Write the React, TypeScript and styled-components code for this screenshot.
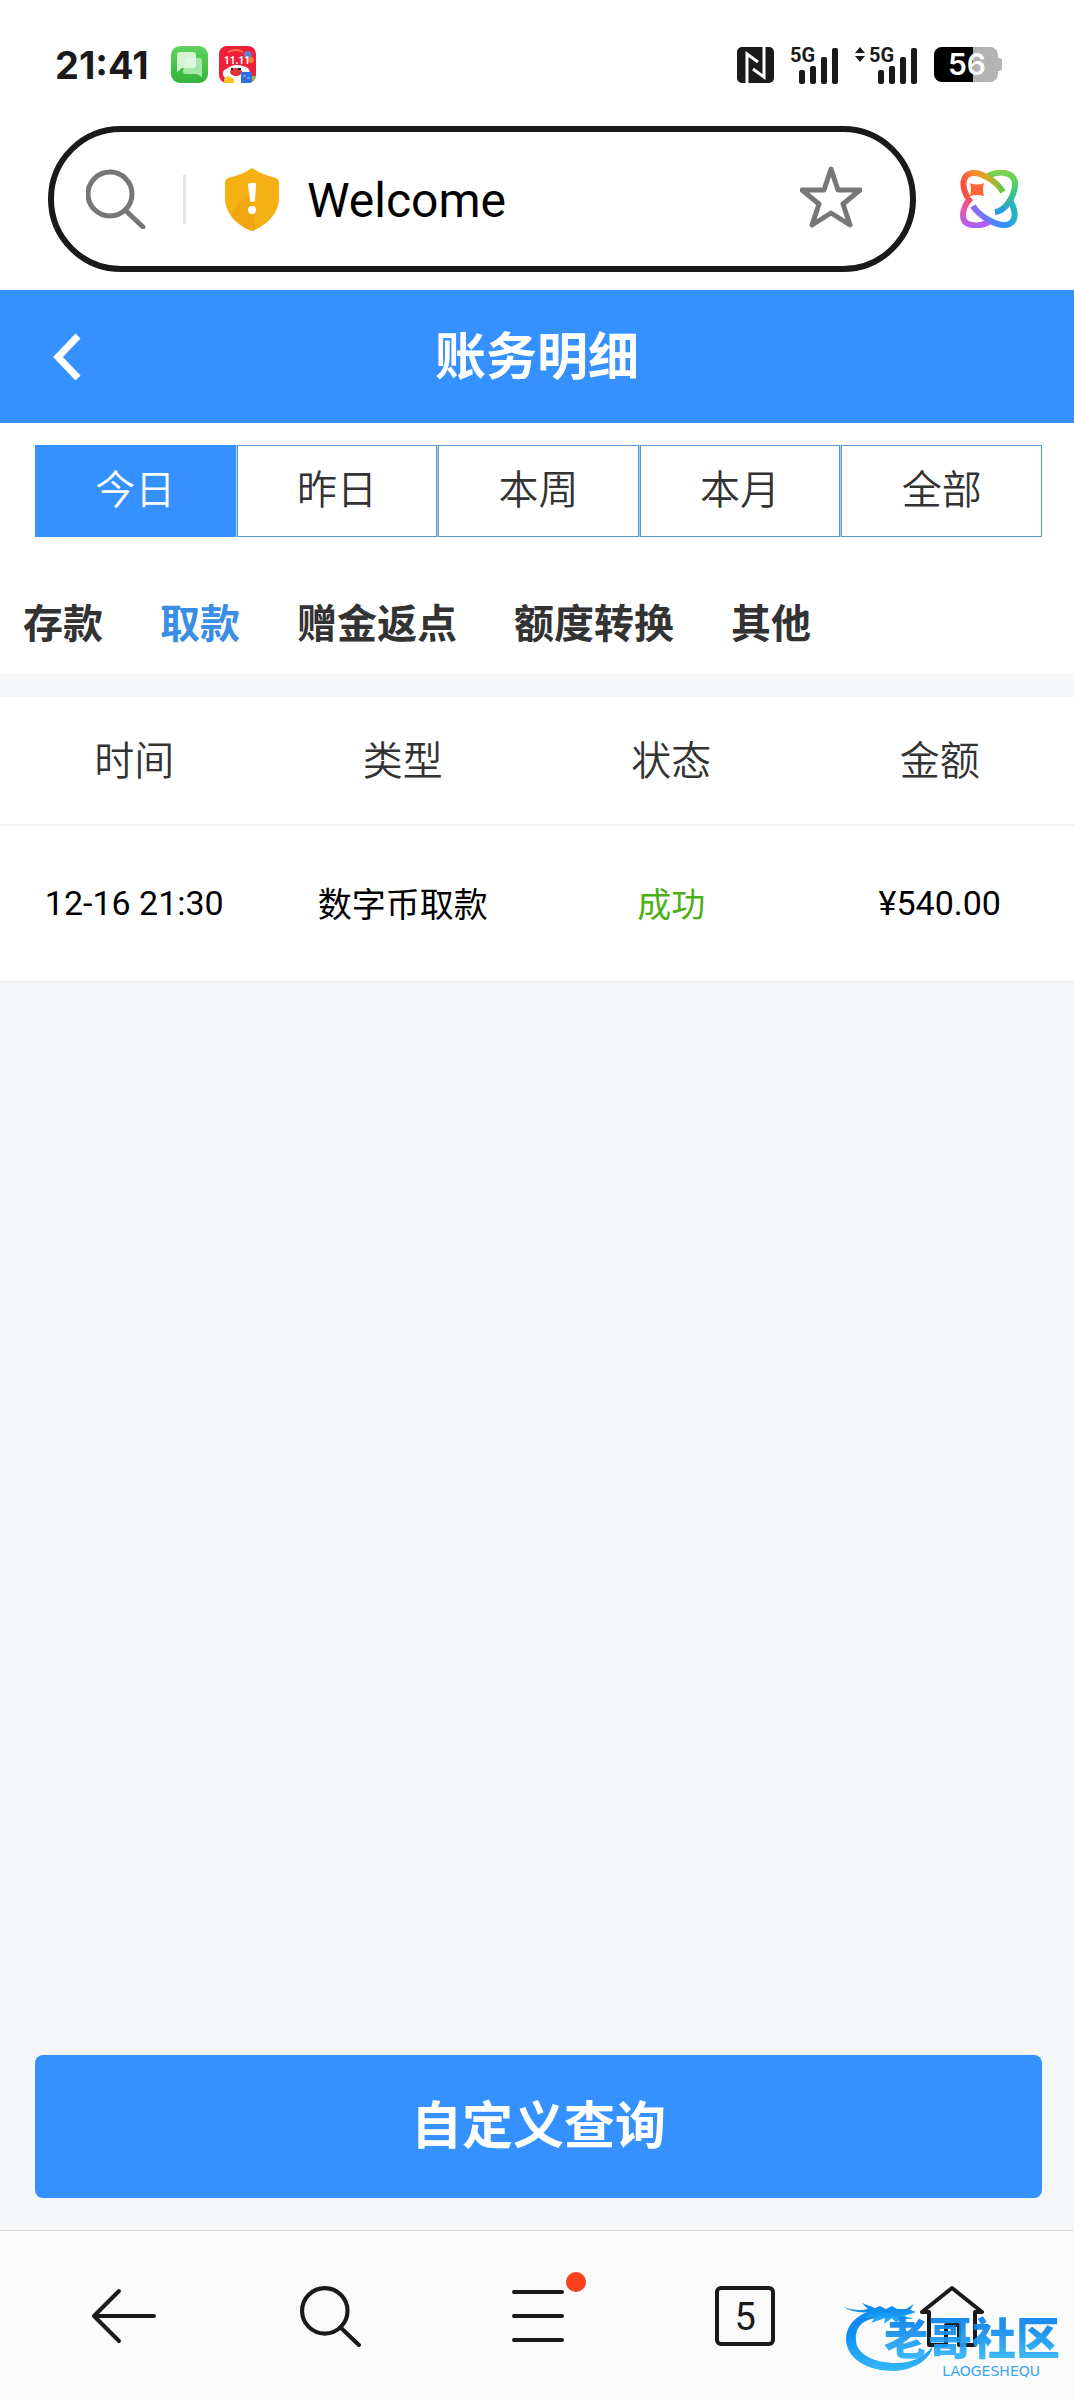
import React, { useState } from "react";
import styled, { createGlobalStyle } from "styled-components";

const BLUE = "#3491ff";
const INK = "#1a1a1a";

const GlobalStyle = createGlobalStyle`
  *, *::before, *::after { box-sizing: border-box; }
  body {
    margin: 0;
    background: #f4f6f8;
    color: #333;
    font-family: Roboto, "Noto Sans CJK SC", sans-serif;
  }
  button, input { font: inherit; color: inherit; }
  button { margin: 0; padding: 0; border: 0; background: none; cursor: pointer; }
  svg { display: block; flex: none; }
`;

const Page = styled.div`
  min-height: 100vh;
  display: flex;
  flex-direction: column;
`;

/* ---------- phone status bar ---------- */

const StatusBar = styled.div`
  display: flex;
  align-items: center;
  justify-content: space-between;
  height: 126px;
  padding: 3px 72px 0 55px;
  background: #fff;
`;

const StatusGroup = styled.div<{ $gap: number }>`
  display: flex;
  align-items: center;
  gap: ${(p) => p.$gap}px;
`;

const Clock = styled.time`
  margin-right: 11px;
  font: 700 38px/44px Inter, sans-serif;
  color: ${INK};
`;

/* ---------- browser address bar ---------- */

const AddressRow = styled.div`
  display: flex;
  align-items: center;
  gap: 44px;
  padding: 0 56px 18px 48px;
  background: #fff;
`;

const AddressPill = styled.div`
  flex: 1;
  min-width: 0;
  display: flex;
  align-items: center;
  height: 146px;
  padding: 0 48px 0 32px;
  border: 6px solid ${INK};
  border-radius: 73px;
`;

const PillDivider = styled.span`
  width: 3px;
  height: 49px;
  margin: 0 39px 0 37px;
  background: #e4e4e4;
`;

const AddressInput = styled.input`
  flex: 1;
  min-width: 0;
  margin-left: 27px;
  padding: 4px 0 0;
  border: 0;
  outline: 0;
  background: none;
  color: #000;
  font-size: 48px;
  line-height: 60px;
`;

const StarButton = styled.button`
  padding-bottom: 4px;
`;

/* ---------- page title ---------- */

const TitleBar = styled.header`
  display: grid;
  grid-template-columns: 1fr auto 1fr;
  align-items: center;
  height: 133px;
  padding: 0 50px;
  background: ${BLUE};
  color: #fff;
`;

const Title = styled.h1`
  margin: 0;
  padding-top: 3px;
  font-size: 51px;
  line-height: 72px;
  font-weight: 700;
`;

/* ---------- filters ---------- */

const FilterPanel = styled.section`
  padding: 22px 0 21px;
  background: #fff;
`;

const RangeTabs = styled.div`
  display: grid;
  grid-template-columns: repeat(5, 1fr);
  gap: 1px;
  margin: 0 32px 0 35px;
  background: #a5d2fb;
`;

const RangeTab = styled.button<{ $active: boolean }>`
  height: 92px;
  border: 1px solid ${(p) => (p.$active ? BLUE : "#5797d0")};
  background: ${(p) => (p.$active ? BLUE : "#fff")};
  color: ${(p) => (p.$active ? "#fff" : "#333")};
  font-size: 40px;
  line-height: 56px;
  font-weight: 350;
`;

const KindTabs = styled.div`
  display: flex;
  gap: 57px;
  margin-top: 60px;
  padding: 0 23px;
`;

const KindTab = styled.button<{ $active: boolean }>`
  color: ${(p) => (p.$active ? "#3a8ee6" : "#333")};
  font-size: 40px;
  line-height: 56px;
  font-weight: 700;
  white-space: nowrap;
`;

/* ---------- records ---------- */

const Records = styled.table`
  width: 100%;
  margin-top: 23px;
  border-collapse: separate;
  border-spacing: 0;
  table-layout: fixed;
  background: #fff;
  text-align: center;
`;

const HeadCell = styled.th`
  height: 129px;
  padding: 0 0 6px;
  border-bottom: 2px solid #f1f2f3;
  font-size: 40px;
  font-weight: 350;
`;

const Cell = styled.td<{ $success?: boolean }>`
  height: 156px;
  padding: 0 0 2px;
  border-bottom: 1px solid #e9eaeb;
  color: ${(p) => (p.$success ? "#4caf16" : "#000")};
  font-size: 34px;
`;

const Actions = styled.div`
  display: flex;
  margin-top: auto;
  padding: 32px 32px 32px 35px;
`;

const QueryButton = styled.button`
  flex: 1;
  height: 143px;
  border-radius: 8px;
  background: ${BLUE};
  color: #fff;
  font-size: 51px;
  line-height: 72px;
  font-weight: 700;
`;

/* ---------- browser toolbar ---------- */

const Toolbar = styled.nav`
  position: relative;
  display: grid;
  grid-template-columns: repeat(5, 1fr);
  height: 170px;
  padding: 0 18px 0 20px;
  border-top: 1px solid #dfdfdf;
  background: #fafafa;
`;

const ToolButton = styled.button`
  display: flex;
  align-items: center;
  justify-content: center;
`;

const MenuIcon = styled.span`
  position: relative;
`;

const Dot = styled.span`
  position: absolute;
  top: -18px;
  right: -22px;
  width: 20px;
  height: 20px;
  border-radius: 50%;
  background: #fa3f1d;
`;

const TabCount = styled.span`
  display: flex;
  align-items: center;
  justify-content: center;
  width: 60px;
  height: 60px;
  padding-top: 2px;
  border: 4px solid ${INK};
  border-radius: 6px;
  color: ${INK};
  font-size: 38px;
  line-height: 44px;
`;

const Watermark = styled.div`
  position: absolute;
  right: 14px;
  bottom: 22px;
  display: flex;
  pointer-events: none;
`;

const WatermarkText = styled.div`
  display: flex;
  flex-direction: column;
  align-items: center;
  margin: 16px 0 0 -50px;
`;

const WatermarkName = styled.span`
  background: linear-gradient(#0c85ee 20%, #2eb2f6 85%);
  background-clip: text;
  -webkit-background-clip: text;
  color: transparent;
  font-size: 44px;
  line-height: 48px;
  font-weight: 900;
  opacity: 0.92;
`;

const WatermarkLatin = styled.span`
  align-self: flex-end;
  margin-right: 20px;
  color: #3ba4ee;
  font: 14px/14px "DejaVu Sans", sans-serif;
`;

/* ---------- drawings ---------- */

const ChatAppIcon = () => (
  <svg width="37" height="37" viewBox="0 0 37 37" aria-hidden="true">
    <defs>
      <linearGradient id="chatBg" x1="0" y1="0" x2="0" y2="1">
        <stop offset="0" stopColor="#5fd35c" />
        <stop offset="1" stopColor="#32b43a" />
      </linearGradient>
    </defs>
    <rect width="37" height="37" rx="9" fill="url(#chatBg)" />
    <path d="M15 12H28a3 3 0 0 1 3 3V31l-5-3H15a3 3 0 0 1-3-3Z" fill="#a6e6a7" />
    <path d="M9 6H22a3 3 0 0 1 3 3V19a3 3 0 0 1-3 3H11l-5 4V9a3 3 0 0 1 3-3Z" fill="#e3f8e3" opacity=".9" />
  </svg>
);

const ShopAppIcon = () => (
  <svg width="37" height="37" viewBox="0 0 37 37" aria-hidden="true">
    <defs>
      <clipPath id="shopClip">
        <rect width="37" height="37" rx="8" />
      </clipPath>
    </defs>
    <g clipPath="url(#shopClip)">
      <rect width="37" height="37" fill="#ee1f36" />
      <circle cx="29" cy="9" r="4" fill="#6e78c2" />
      <circle cx="32" cy="14" r="3" fill="#f4793a" />
      <path d="M9 6q8-4 15 0" stroke="#ff6d55" strokeWidth="2" fill="none" />
      <path d="M4 29Q3 24 9 22L12 20q6-2 12 0l5 2q3 4 1 8l-8 7H9Z" fill="#fff" />
      <ellipse cx="17" cy="26" rx="6" ry="4" fill="#dd3435" />
      <path d="M12 23h2M19 23h3" stroke="#222" strokeWidth="2" />
      <path d="M5 33l4-3 6 3v4H5Z" fill="#ffc51f" />
      <rect x="22" y="26" width="11" height="11" rx="1" fill="#2d6fe0" />
      <path d="M24 30h3M28 32h3" stroke="#a9cbff" />
      <path d="M33 30h4v7h-4Z" fill="#8cbf4e" />
    </g>
    <text x="18" y="18" textAnchor="middle" fontFamily="Roboto, sans-serif" fontWeight="700" fontSize="10" fill="#fff">
      11.11
    </text>
  </svg>
);

const NfcIcon = () => (
  <svg width="37" height="36" viewBox="0 0 37 36" aria-hidden="true">
    <rect width="37" height="36" rx="5" fill={INK} />
    <path d="M10 36V7L21 15M16 22L27 30V0" fill="none" stroke="#fff" strokeWidth="3" />
  </svg>
);

const Signal = ({ arrows = false }: { arrows?: boolean }) => {
  const shift = arrows ? 14 : 0;
  return (
    <svg width={49 + shift} height="50" viewBox={`0 -6 ${49 + shift} 50`} aria-hidden="true" fill={INK}>
      {arrows && <path d="M0 7L5 1L10 7ZM0 10L5 16L10 10Z" />}
      <g transform={`translate(${shift} 0)`}>
        <text x="0" y="16" fontFamily="Roboto, sans-serif" fontWeight="700" fontSize="20" fill={INK}>
          5G
        </text>
        <rect x="9" y="24" width="6" height="14" rx="2" />
        <rect x="20" y="20" width="6" height="18" rx="2" />
        <rect x="31" y="11" width="6" height="27" rx="2" />
        <rect x="42" y="2" width="6" height="36" rx="2" />
      </g>
    </svg>
  );
};

const BatteryIcon = () => (
  <svg width="68" height="35" viewBox="0 0 68 35" role="img" aria-label="56%">
    <rect x="0" y="0" width="64" height="35" rx="8" fill="#b3b3b3" />
    <rect x="60" y="11" width="8" height="13" rx="3" fill="#b3b3b3" />
    <path d="M39 0V35H8a8 8 0 0 1-8-8V8a8 8 0 0 1 8-8Z" fill="#000" />
    <text x="33" y="28" textAnchor="middle" fontFamily="Inter, sans-serif" fontWeight="600" fontSize="30" fill="#fff">
      56
    </text>
  </svg>
);

const Magnifier = ({ color, size, width }: { color: string; size: number; width: number }) => (
  <svg width={size} height={size} viewBox="0 0 60 60" fill="none" stroke={color} strokeWidth={width} strokeLinecap="round" aria-hidden="true">
    <circle cx="24" cy="25" r="22" />
    <path d="M39 41L57 58" />
  </svg>
);

const ShieldIcon = () => (
  <svg width="55" height="63" viewBox="0 0 55 63" aria-hidden="true">
    <path d="M27 0Q37 7 51 10Q54 11 54 15V30C54 47 40 57 30 62Q27 63 24 62C14 57 0 47 0 30V15Q0 11 3 10Q17 7 27 0Z" fill="#f5b014" />
    <path d="M6 48Q12 32 27 25L30 62Q27 63 24 62Q13 57 6 48Z" fill="#eea20e" opacity=".7" />
    <path d="M23 17Q23 15 25 15H30Q32 15 31 17L30 32Q30 34 27 34Q25 34 25 32Z" fill="#fff" />
    <circle cx="27" cy="42" r="4" fill="#fff" />
  </svg>
);

const StarIcon = () => (
  <svg width="62" height="62" viewBox="0 0 62 62" fill="none" stroke="#777" strokeWidth="5" strokeLinejoin="round" aria-hidden="true">
    <path d="M31 3L38 24H60L43 38L50 59L31 47L12 59L19 38L2 24H24Z" />
  </svg>
);

const OrbitIcon = () => (
  <svg width="58" height="58" viewBox="0 0 58 58" fill="none" strokeWidth="6" aria-hidden="true">
    <defs>
      <linearGradient id="orbTL" gradientUnits="userSpaceOnUse" x1="4" y1="26" x2="44" y2="16">
        <stop offset="0" stopColor="#f8453f" />
        <stop offset=".35" stopColor="#fb8a33" />
        <stop offset=".65" stopColor="#d7ac1d" />
        <stop offset="1" stopColor="#5ac94f" />
      </linearGradient>
      <linearGradient id="orbTR" gradientUnits="userSpaceOnUse" x1="40" y1="0" x2="40" y2="44">
        <stop offset="0" stopColor="#84d44a" />
        <stop offset=".45" stopColor="#3fce74" />
        <stop offset="1" stopColor="#2494ee" />
      </linearGradient>
      <linearGradient id="orbBR" gradientUnits="userSpaceOnUse" x1="12" y1="50" x2="54" y2="32">
        <stop offset="0" stopColor="#a45cf5" />
        <stop offset=".6" stopColor="#2f93fb" />
        <stop offset="1" stopColor="#1dc0b0" />
      </linearGradient>
      <linearGradient id="orbBL" gradientUnits="userSpaceOnUse" x1="16" y1="24" x2="18" y2="58">
        <stop offset="0" stopColor="#fb4350" />
        <stop offset=".45" stopColor="#df5bb4" />
        <stop offset="1" stopColor="#a65ff9" />
      </linearGradient>
    </defs>
    <path d="M29 52C17 58 3 56 3 46C3 40 6 33 11 28" stroke="url(#orbBL)" />
    <path d="M13 36C19 46 36 56 46 55C57 53 57 41 49 29" stroke="url(#orbBR)" />
    <path d="M28 6C40 0 53 2 55 12C56 24 46 41 35 42" stroke="url(#orbTR)" />
    <path d="M43 22C36 10 20 2 12 3C2 5 1 16 8 28" stroke="url(#orbTL)" />
    <path d="M10 13Q17 16 24 13Q22 19 24 26Q17 24 10 26Q12 19 10 13Z" fill="#ff6338" />
  </svg>
);

const ChevronLeft = () => (
  <svg width="34" height="48" viewBox="0 0 34 48" fill="none" stroke="#fff" strokeWidth="7" aria-hidden="true">
    <path d="M28 3L8 24L28 45" />
  </svg>
);

const ArrowLeft = () => (
  <svg width="66" height="56" viewBox="0 0 66 56" fill="none" stroke={INK} strokeWidth="4" strokeLinecap="round" strokeLinejoin="round" aria-hidden="true">
    <path d="M28 3L3 28L28 53M3 28H63" />
  </svg>
);

const MenuLines = () => (
  <svg width="52" height="52" viewBox="0 0 52 52" stroke={INK} strokeWidth="4" strokeLinecap="round" aria-hidden="true">
    <path d="M2 2H50M2 26H50M2 50H50" />
  </svg>
);

const HomeIcon = () => (
  <svg width="66" height="64" viewBox="0 0 66 64" fill="none" stroke={INK} strokeWidth="4" strokeLinejoin="round" aria-hidden="true">
    <path d="M10 28H3L33 4L63 28H56V61H40V41H27V61H10Z" />
  </svg>
);

const DragonMark = () => (
  <svg width="90" height="74" viewBox="0 0 90 74" aria-hidden="true">
    <defs>
      <linearGradient id="dragon" x1="0" y1="0" x2="0" y2="1">
        <stop offset="0" stopColor="#1587ec" />
        <stop offset=".4" stopColor="#0d8ff5" />
        <stop offset="1" stopColor="#35b8f6" />
      </linearGradient>
    </defs>
    <g fill="url(#dragon)">
      <path d="M36 9C14 12 2 24 2 40C3 58 22 71 50 71C70 70 86 60 89 46C80 57 68 63 52 63C30 63 12 54 12 40C11 28 18 19 34 18Z" />
      <path d="M0 7Q12 12 24 9L18 3L31 8L36 6L42 9L48 6L53 9L62 9L70 4L66 10L72 12L60 16L70 19L57 19L52 23L48 18L40 24L41 18L33 21L27 23L32 16L20 18L27 12Q10 14 0 7Z" />
    </g>
  </svg>
);

/* ---------- screen ---------- */

const ranges = ["今日", "昨日", "本周", "本月", "全部"];
const kinds = ["存款", "取款", "赠金返点", "额度转换", "其他"];
const columns = ["时间", "类型", "状态", "金额"];
const records = [{ time: "12-16 21:30", kind: "数字币取款", status: "成功", amount: "¥540.00" }];

export default function App() {
  const [range, setRange] = useState("今日");
  const [kind, setKind] = useState("取款");
  const [address, setAddress] = useState("Welcome");

  return (
    <Page>
      <GlobalStyle />
      <StatusBar>
        <StatusGroup $gap={11}>
          <Clock>21:41</Clock>
          <ChatAppIcon />
          <ShopAppIcon />
        </StatusGroup>
        <StatusGroup $gap={16}>
          <NfcIcon />
          <Signal />
          <Signal arrows />
          <BatteryIcon />
        </StatusGroup>
      </StatusBar>

      <AddressRow>
        <AddressPill>
          <Magnifier color="#777" size={60} width={5} />
          <PillDivider />
          <ShieldIcon />
          <AddressInput aria-label="地址栏" value={address} onChange={(e) => setAddress(e.target.value)} />
          <StarButton aria-label="收藏">
            <StarIcon />
          </StarButton>
        </AddressPill>
        <button aria-label="助手">
          <OrbitIcon />
        </button>
      </AddressRow>

      <TitleBar>
        <button aria-label="返回">
          <ChevronLeft />
        </button>
        <Title>账务明细</Title>
      </TitleBar>

      <FilterPanel>
        <RangeTabs>
          {ranges.map((r) => (
            <RangeTab key={r} $active={r === range} aria-pressed={r === range} onClick={() => setRange(r)}>
              {r}
            </RangeTab>
          ))}
        </RangeTabs>
        <KindTabs>
          {kinds.map((k) => (
            <KindTab key={k} $active={k === kind} aria-pressed={k === kind} onClick={() => setKind(k)}>
              {k}
            </KindTab>
          ))}
        </KindTabs>
      </FilterPanel>

      <Records>
        <thead>
          <tr>
            {columns.map((c) => (
              <HeadCell key={c} scope="col">
                {c}
              </HeadCell>
            ))}
          </tr>
        </thead>
        <tbody>
          {records.map((r) => (
            <tr key={r.time}>
              <Cell>{r.time}</Cell>
              <Cell>{r.kind}</Cell>
              <Cell $success>{r.status}</Cell>
              <Cell>{r.amount}</Cell>
            </tr>
          ))}
        </tbody>
      </Records>

      <Actions>
        <QueryButton>自定义查询</QueryButton>
      </Actions>

      <Toolbar>
        <ToolButton aria-label="后退">
          <ArrowLeft />
        </ToolButton>
        <ToolButton aria-label="搜索">
          <Magnifier color={INK} size={62} width={4} />
        </ToolButton>
        <ToolButton aria-label="菜单">
          <MenuIcon>
            <MenuLines />
            <Dot />
          </MenuIcon>
        </ToolButton>
        <ToolButton aria-label="标签页">
          <TabCount>5</TabCount>
        </ToolButton>
        <ToolButton aria-label="主页">
          <HomeIcon />
        </ToolButton>
        <Watermark>
          <DragonMark />
          <WatermarkText>
            <WatermarkName>老哥社区</WatermarkName>
            <WatermarkLatin>LAOGESHEQU</WatermarkLatin>
          </WatermarkText>
        </Watermark>
      </Toolbar>
    </Page>
  );
}
